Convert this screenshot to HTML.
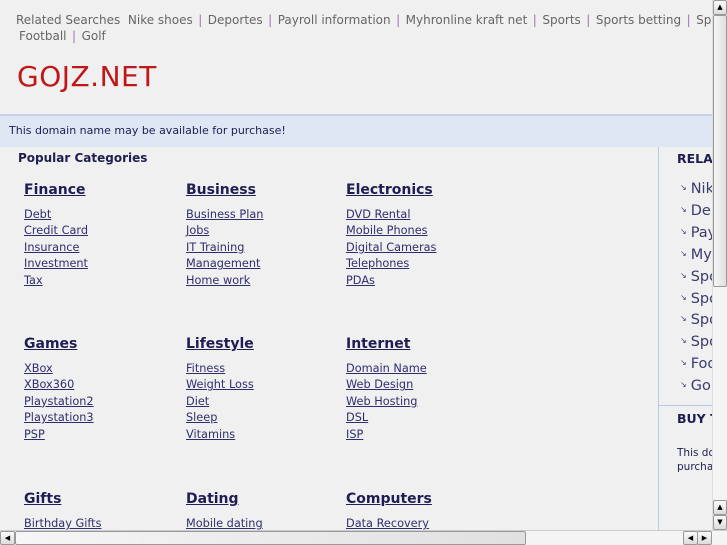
<!DOCTYPE html>
<html><head><meta charset="utf-8"><style>
*{margin:0;padding:0;box-sizing:border-box}
html,body{width:727px;height:545px;overflow:hidden}
body{background:#f0f0f0;font-family:"DejaVu Sans","Liberation Sans",sans-serif;position:relative}
.clip{position:absolute;left:0;top:0;width:712px;height:530px;overflow:hidden}
.a{position:absolute;white-space:nowrap}
.top{font-size:12px;color:#666}
.top .s{color:#a070b0;margin:0 5.5px}
.logo{left:17px;top:60px;font-size:28px;color:#c01818;letter-spacing:0.5px}
.band{left:0;top:114px;width:712px;height:33px;background:#e0e7f4;border-top:2px solid #c8d2ea}
.band span{position:absolute;left:9px;top:8px;font-size:11px;color:#1e1e50}
.pc{left:18px;top:151px;font-size:12px;font-weight:bold;color:#1e1e50}
.col{position:absolute}
.col h3{font-size:14px;font-weight:bold;color:#1e1e55;text-decoration:underline;height:25px;line-height:17px}
.col a{display:block;font-size:11.3px;color:#2e2e6e;text-decoration:underline;line-height:16.4px}
.vl{left:658px;top:147px;width:1px;height:383px;background:#b8c8e8}
.hl{left:658px;top:405px;width:54px;height:1px;background:#b8c8e8}
.rel{left:677px;top:151px;font-size:12.5px;font-weight:bold;color:#1e1e50}
.rl{left:680px;top:178px;font-size:14.5px;color:#3a3a6e;line-height:20.9px}
.rl div:before{content:"\2198";font-size:8px;margin-right:4px;vertical-align:3px}
.buy{left:677px;top:411px;font-size:12.5px;font-weight:bold;color:#1e1e50}
.bt{left:677px;top:446px;font-size:10.5px;color:#1e1e50;line-height:14px}
.vs{left:712px;top:0;width:15px;height:530px;background:#f4f4f4;border-left:1px solid #ddd}
.btn{position:absolute;width:14px;height:15px;background:linear-gradient(#fafafa,#dcdcdc);border:1px solid #999;border-radius:2px;font-size:7px;text-align:center;line-height:13px;color:#000}
.thumb{position:absolute;background:linear-gradient(90deg,#f6f6f6,#e0e0e0);border:1px solid #999;border-radius:2px}
.hs{left:0;top:530px;width:727px;height:15px;background:#f4f4f4;border-top:1px solid #ccc}
</style></head><body>
<div class="clip">
<div class="a top" style="left:16px;top:13px">Related Searches&nbsp; Nike shoes<span class="s">|</span>Deportes<span class="s">|</span>Payroll information<span class="s">|</span>Myhronline kraft net<span class="s">|</span>Sports<span class="s">|</span>Sports betting<span class="s">|</span>Sports</div>
<div class="a top" style="left:19px;top:29px">Football<span class="s">|</span>Golf</div>
<div class="a logo">GOJZ.NET</div>
<div class="a band"><span>This domain name may be available for purchase!</span></div>
<div class="a pc">Popular Categories</div>

<div class="col" style="left:24px;top:182px"><h3>Finance</h3><a>Debt</a><a>Credit Card</a><a>Insurance</a><a>Investment</a><a>Tax</a></div>
<div class="col" style="left:186px;top:182px"><h3>Business</h3><a>Business Plan</a><a>Jobs</a><a>IT Training</a><a>Management</a><a>Home work</a></div>
<div class="col" style="left:346px;top:182px"><h3>Electronics</h3><a>DVD Rental</a><a>Mobile Phones</a><a>Digital Cameras</a><a>Telephones</a><a>PDAs</a></div>

<div class="col" style="left:24px;top:336px"><h3>Games</h3><a>XBox</a><a>XBox360</a><a>Playstation2</a><a>Playstation3</a><a>PSP</a></div>
<div class="col" style="left:186px;top:336px"><h3>Lifestyle</h3><a>Fitness</a><a>Weight Loss</a><a>Diet</a><a>Sleep</a><a>Vitamins</a></div>
<div class="col" style="left:346px;top:336px"><h3>Internet</h3><a>Domain Name</a><a>Web Design</a><a>Web Hosting</a><a>DSL</a><a>ISP</a></div>

<div class="col" style="left:24px;top:491px"><h3>Gifts</h3><a>Birthday Gifts</a></div>
<div class="col" style="left:186px;top:491px"><h3>Dating</h3><a>Mobile dating</a></div>
<div class="col" style="left:346px;top:491px"><h3>Computers</h3><a>Data Recovery</a></div>

<div class="a vl"></div><div class="a hl"></div>
<div class="a rel">RELATED</div>
<div class="a rl"><div>Nike shoes</div><div>Deportes</div><div>Payroll</div><div>Myhronline</div><div>Sports</div><div>Sports</div><div>Sports</div><div>Sports</div><div>Football</div><div>Golf</div></div>
<div class="a buy">BUY THIS</div>
<div class="a bt">This domain<br>purchase</div>
</div>

<div class="a vs">
<div class="btn" style="left:0;top:0">&#9650;</div>
<div class="thumb" style="left:0;top:15px;width:14px;height:272px"></div>
<div class="btn" style="left:0;top:500px">&#9650;</div>
<div class="btn" style="left:0;top:515px">&#9660;</div>
</div>
<div class="a hs">
<div class="btn" style="left:0;top:0;width:15px;height:14px">&#9664;</div>
<div class="thumb" style="left:15px;top:0;width:511px;height:14px"></div>
<div class="btn" style="left:683px;top:0;width:15px;height:14px">&#9664;</div>
<div class="btn" style="left:697px;top:0;width:15px;height:14px">&#9654;</div>
</div>
</body></html>
